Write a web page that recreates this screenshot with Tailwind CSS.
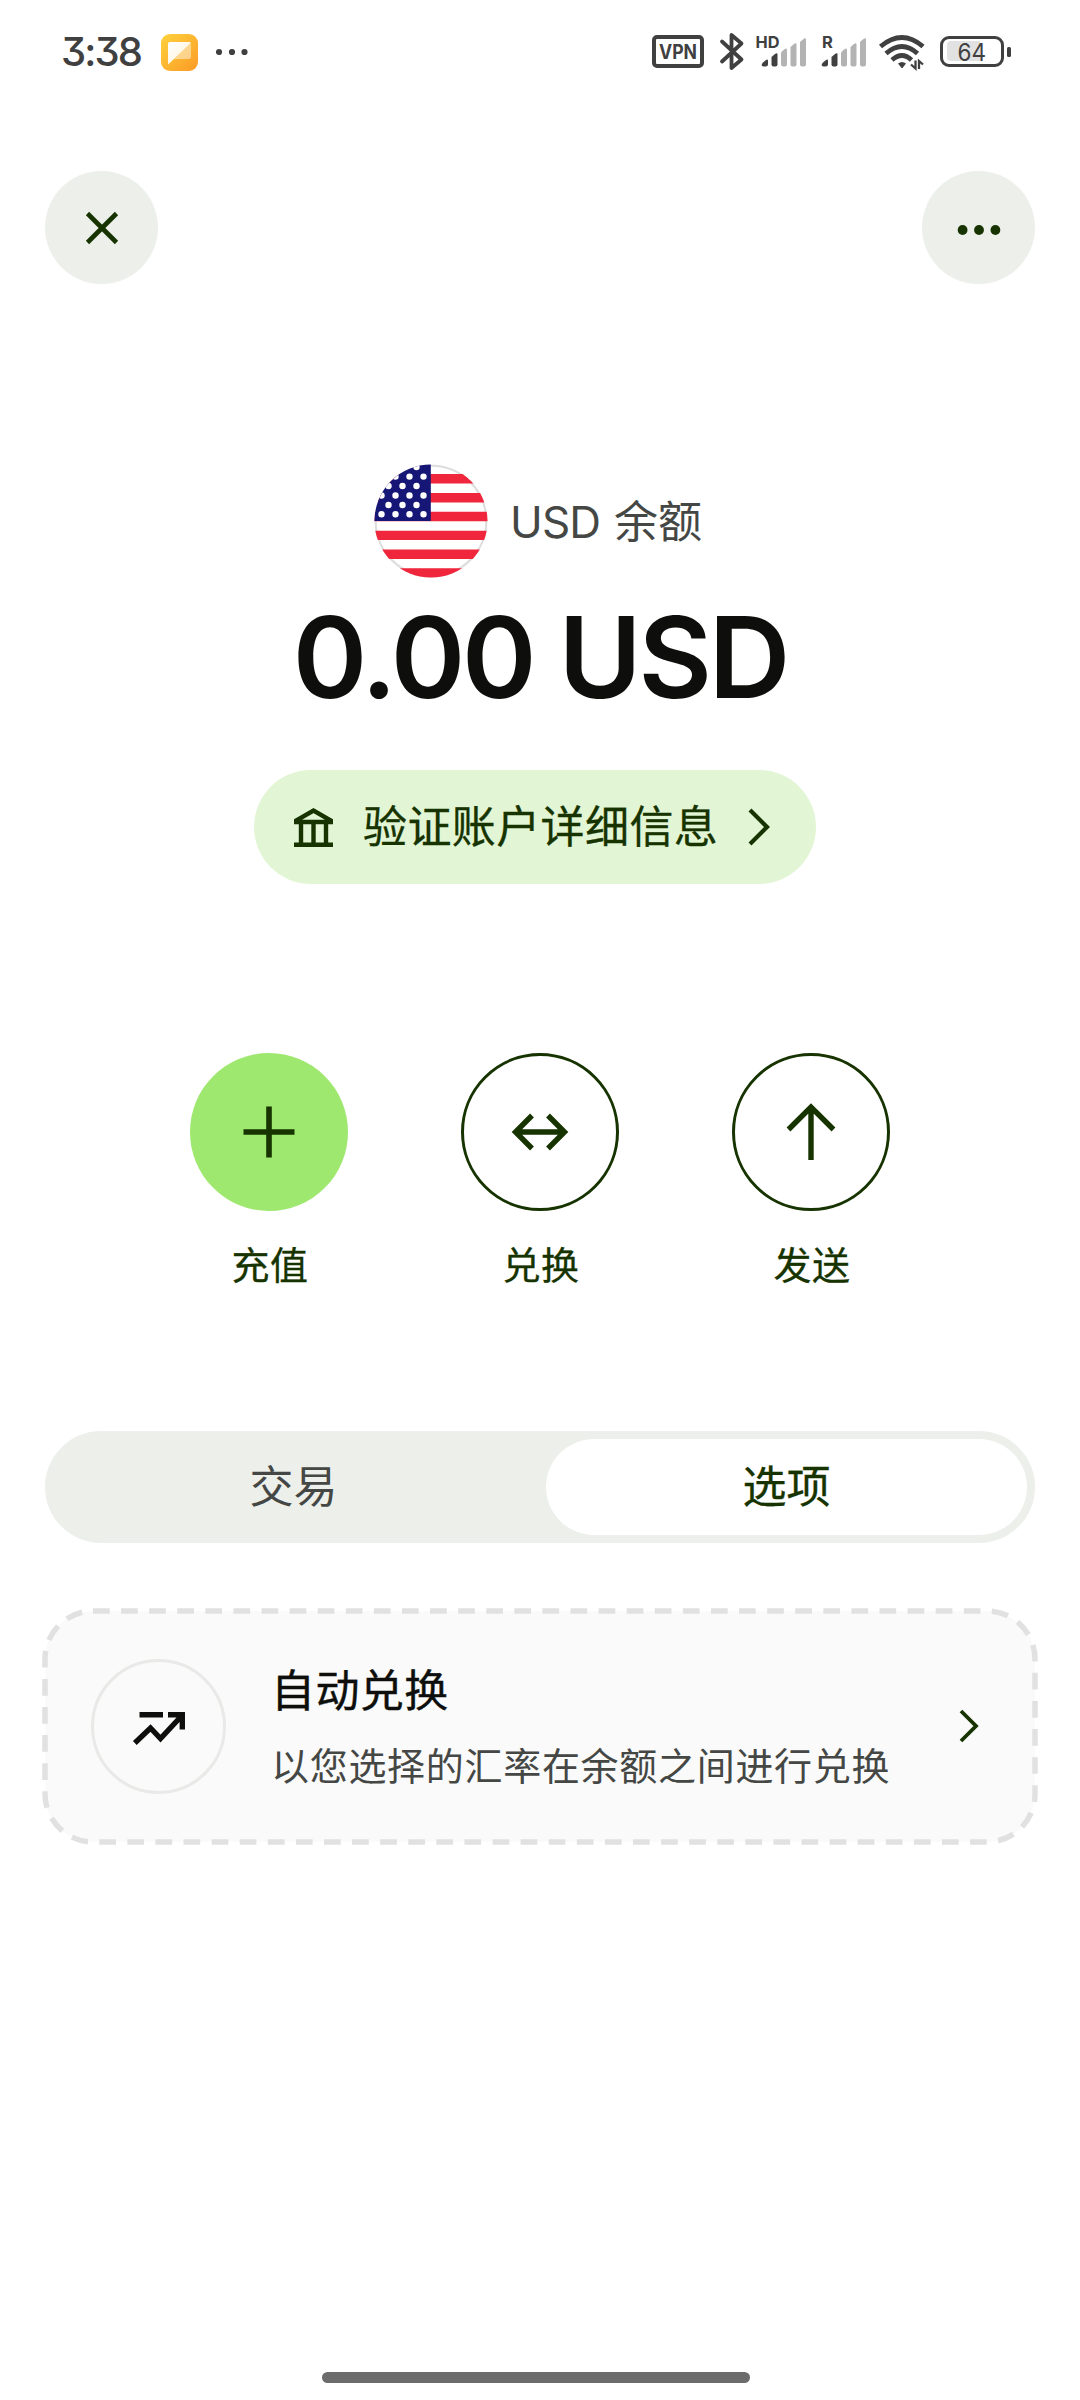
<!DOCTYPE html>
<html lang="zh-CN">
<head>
<meta charset="utf-8">
<title>USD 余额</title>
<script src="https://cdn.jsdelivr.net/npm/@tailwindcss/browser@4"></script>
</head>
<body class="bg-white">
<div class="relative flex h-[2400px] w-[1080px] flex-col overflow-hidden bg-white font-['Inter','Noto_Sans_CJK_SC',sans-serif] text-[#163300]">

  <!-- Status bar -->
  <header class="flex h-[104px] items-center justify-between pl-[61px] pr-[69px] text-[#404040]">
    <div class="flex items-center">
      <span class="w-[100px] whitespace-nowrap text-[40px] leading-[40px] font-[450] tracking-[-1.9px] [font-feature-settings:'cv09']">3:38</span>
      <svg width="37" height="37" viewBox="0 0 37 37">
        <defs>
          <linearGradient id="note" x1="0" y1="0" x2="1" y2="1"><stop offset="0" stop-color="#ffd23c"/><stop offset="1" stop-color="#fb9a26"/></linearGradient>
          <linearGradient id="fold" x1="0" y1="0" x2="1" y2="1"><stop offset="0" stop-color="#fff"/><stop offset="1" stop-color="#fff3d6"/></linearGradient>
        </defs>
        <rect width="37" height="37" rx="9" fill="url(#note)"/>
        <path d="M9 8H27.500Q30 8 30 10.500V22.500Q30 25 27.500 25H13L7 30.500V10Q7 8 9 8Z" fill="#fff" opacity=".45"/>
        <path d="M9 8H27.500Q30 8 29.500 9L7 30.500V10Q7 8 9 8Z" fill="url(#fold)"/>
      </svg>
      <svg class="ml-[18px]" width="32" height="8" viewBox="0 0 32 8" fill="#404040"><circle cx="3" cy="4" r="3.100"/><circle cx="16" cy="4" r="3.100"/><circle cx="28.500" cy="4" r="3.100"/></svg>
    </div>
    <svg width="359" height="40" viewBox="652 32 359 40" fill="#404040" font-family="Inter, sans-serif">
      <rect x="654" y="37" width="48" height="29" rx="3" fill="none" stroke="#404040" stroke-width="4"/>
      <text x="659" y="58.500" font-size="19.500" font-weight="700" textLength="38" lengthAdjust="spacingAndGlyphs">VPN</text>
      <path d="M722 41.500 741.500 59.500 731.500 68V35L741.500 43.500 722 61.500" fill="none" stroke="#404040" stroke-width="3.800" stroke-linejoin="round" stroke-linecap="round"/>
      <text x="755.500" y="47.500" font-size="16.500" font-weight="700" textLength="24" lengthAdjust="spacingAndGlyphs">HD</text>
      <path d="M763 62.500 766 60Q768 59 768 60.500V64Q768 66.500 765.500 66.500H763.500Q760 66 763 62.500Z"/>
      <path d="M771.500 57Q777.500 51 777.500 54.500V64.500Q777.500 66.500 775.500 66.500H773.500Q771.500 66.500 771.500 64.500Z"/>
      <g fill="#b3b3b3">
        <path d="M781 52.500Q787 46 787 50V64.500Q787 66.500 785 66.500H783Q781 66.500 781 64.500Z"/>
        <path d="M790.500 47Q796.500 41 796.500 44.500V64.500Q796.500 66.500 794.500 66.500H792.500Q790.500 66.500 790.500 64.500Z"/>
        <path d="M800 42Q806 36 806 39.500V64.500Q806 66.500 804 66.500H802Q800 66.500 800 64.500Z"/>
      </g>
      <text x="822" y="47.500" font-size="16.500" font-weight="700">R</text>
      <g transform="translate(60)">
        <path d="M763 62.500 766 60Q768 59 768 60.500V64Q768 66.500 765.500 66.500H763.500Q760 66 763 62.500Z"/>
        <path d="M771.500 57Q777.500 51 777.500 54.500V64.500Q777.500 66.500 775.500 66.500H773.500Q771.500 66.500 771.500 64.500Z"/>
        <g fill="#b3b3b3">
          <path d="M781 52.500Q787 46 787 50V64.500Q787 66.500 785 66.500H783Q781 66.500 781 64.500Z"/>
          <path d="M790.500 47Q796.500 41 796.500 44.500V64.500Q796.500 66.500 794.500 66.500H792.500Q790.500 66.500 790.500 64.500Z"/>
          <path d="M800 42Q806 36 806 39.500V64.500Q806 66.500 804 66.500H802Q800 66.500 800 64.500Z"/>
        </g>
      </g>
      <g fill="none" stroke="#404040" stroke-width="4.800">
        <path d="M880.500 46.500Q902 28.500 923 46.500"/><path d="M886 53.500Q902 39.500 917.500 53.500"/><path d="M892 60Q902 51 911.500 60"/>
      </g>
      <path d="M898 63.500Q902 60.500 906 63.500L902.500 68H901.500Z"/>
      <path d="M911 64.500 915.500 68.500V60.500M919 69V61L923 64.500" fill="none" stroke="#404040" stroke-width="2.300"/>
      <rect x="941.500" y="37.500" width="61" height="28" rx="7.500" fill="none" stroke="#404040" stroke-width="3"/>
      <path d="M951 41H980V61H951Q947 61 947 57V45Q947 41 951 41Z" fill="#e2e2e2"/>
      <text x="957.500" y="60.500" font-size="24" font-weight="400" textLength="28.500" lengthAdjust="spacingAndGlyphs">64</text>
      <rect x="1007" y="47" width="4" height="10" rx="1.500"/>
    </svg>
  </header>

  <!-- Top actions -->
  <nav class="mt-[67px] flex justify-between px-[45px]">
    <button class="flex size-[113px] items-center justify-center rounded-full bg-[#edefeb]">
      <svg width="34" height="34" viewBox="0 0 34 34" fill="none" stroke="#163300" stroke-width="4.600"><path d="M2.500 2.500 31.500 31.500M31.500 2.500 2.500 31.500"/></svg>
    </button>
    <button class="flex size-[113px] items-center justify-center rounded-full bg-[#edefeb]">
      <svg class="mt-[5px]" width="44" height="12" viewBox="0 0 44 12" fill="#163300"><circle cx="5.600" cy="6" r="4.900"/><circle cx="22" cy="6" r="4.900"/><circle cx="38.400" cy="6" r="4.900"/></svg>
    </button>
  </nav>

  <!-- Balance -->
  <section class="mt-[180px] flex flex-col items-center">
    <div class="flex h-[114px] w-[332px] items-center gap-[22px]">
      <svg class="shrink-0" width="114" height="114" viewBox="0 0 114 114">
        <defs><clipPath id="disc"><circle cx="57" cy="57" r="56.500"/></clipPath></defs>
        <g clip-path="url(#disc)">
          <rect width="114" height="114" fill="#fff"/>
          <circle cx="57" cy="57" r="55.500" fill="none" stroke="#dedede" stroke-width="2.500"/>
          <path d="M0 10h114v9.400H0zM0 29h114v9.400H0zM0 47.800h114v9.400H0zM0 66.700h114v9.400H0zM0 85.500h114v9.400H0zM0 104.300h114v9.700H0z" fill="#f0263c"/>
          <rect width="56.800" height="57" fill="#151676"/>
          <path d="M28.500 3.100h.01M42.500 3.100h.01M21.500 12.600h.01M35.500 12.600h.01M49.500 12.600h.01M14.500 22h.01M28.500 22h.01M42.500 22h.01M7.500 31.500h.01M21.500 31.500h.01M35.500 31.500h.01M49.500 31.500h.01M14.500 41h.01M28.500 41h.01M42.500 41h.01M7.500 50.300h.01M21.500 50.300h.01M35.500 50.300h.01M49.500 50.300h.01" fill="none" stroke="#fff" stroke-width="6.400" stroke-linecap="round"/>
        </g>
      </svg>
      <span class="mt-[2px] flex whitespace-nowrap text-[44px] leading-[56px] text-[#454745]"><span class="w-[91px] tracking-[-0.8px]">USD</span><span class="ml-[13px]">余额</span></span>
    </div>
    <h1 class="mt-[15px] mb-[-1px] whitespace-nowrap text-[113px] leading-[128px] font-semibold tracking-[-3.200px] text-[#0e0f0c]">0.00 USD</h1>

    <button class="mt-[50px] mr-[10px] flex h-[114px] w-[562px] items-center rounded-full bg-[#e2f6d5] pl-[40px]">
      <svg width="39" height="40" viewBox="0 0 39 40" fill="none" stroke="#163300" stroke-width="4.400"><path d="M0 37.800H39M7 38V15M19.500 38V15M32 38V15M2.200 15V13.500L19.500 3.500 36.800 13.500V15Z"/></svg>
      <span class="ml-[30px] whitespace-nowrap text-[44px] leading-[56px] tracking-[0.4px] [-webkit-text-stroke:0.3px_#163300]">验证账户详细信息</span>
      <svg class="ml-[30px]" width="22" height="38" viewBox="0 0 22 38" fill="none" stroke="#163300" stroke-width="4.200"><path d="M2 2 19 19 2 36"/></svg>
    </button>
  </section>

  <!-- Actions -->
  <section class="mt-[169px] flex justify-center gap-[113px]">
    <div class="flex w-[158px] flex-col items-center">
      <div class="flex size-[158px] items-center justify-center rounded-full bg-[#9fe870]">
        <svg width="52" height="52" viewBox="0 0 52 52" stroke="#163300" stroke-width="5.600"><path d="M26 .5V51.500M.5 26H51.500"/></svg>
      </div>
      <span class="mt-[30px] ml-[2px] whitespace-nowrap text-[38px] leading-[48px] tracking-[0.6px] [-webkit-text-stroke:0.3px_#163300]">充值</span>
    </div>
    <div class="flex w-[158px] flex-col items-center">
      <div class="flex size-[158px] items-center justify-center rounded-full border-[3px] border-[#163300]">
        <svg width="58" height="40" viewBox="0 0 58 40" fill="none" stroke="#163300" stroke-width="5.400"><path d="M4 20H54M21 3.500 4.500 20 21 36.500M37 3.500 53.500 20 37 36.500"/></svg>
      </div>
      <span class="mt-[30px] ml-[2px] whitespace-nowrap text-[38px] leading-[48px] tracking-[0.6px] [-webkit-text-stroke:0.3px_#163300]">兑换</span>
    </div>
    <div class="flex w-[158px] flex-col items-center">
      <div class="flex size-[158px] items-center justify-center rounded-full border-[3px] border-[#163300]">
        <svg class="mb-[2px]" width="50" height="57" viewBox="0 0 50 57" fill="none" stroke="#163300" stroke-width="5.400"><path d="M25 4V57M2.500 26.500 25 4 47.500 26.500"/></svg>
      </div>
      <span class="mt-[30px] ml-[2px] whitespace-nowrap text-[38px] leading-[48px] tracking-[0.6px] [-webkit-text-stroke:0.3px_#163300]">发送</span>
    </div>
  </section>

  <!-- Tabs -->
  <div class="mx-[45px] mt-[142px] flex h-[112px] justify-between rounded-full bg-[#edefeb] p-[8px] text-[44px] leading-[56px]">
    <div class="flex w-[479px] items-center justify-center pl-[2px] text-[#454745]">交易</div>
    <div class="flex w-[481px] items-center justify-center rounded-full bg-white [-webkit-text-stroke:0.3px_#163300]">选项</div>
  </div>

  <!-- Auto conversion card -->
  <div class="relative mx-[42px] mt-[65px] flex h-[236px] items-center pl-[49px]">
    <svg class="absolute inset-0" width="996" height="237" viewBox="0 0 996 237"><rect x="3" y="3" width="990" height="231" rx="48" fill="#fafafa" stroke="#e1e1e1" stroke-width="5.500" stroke-dasharray="16.700 11.390"/></svg>
    <div class="relative flex size-[135px] shrink-0 items-center justify-center rounded-full border-[3px] border-[#e9eae8]">
      <svg class="mt-[3px]" width="54" height="34" viewBox="0 0 54 34" fill="none" stroke="#0e0f0c" stroke-width="5.400"><path d="M7.500 3.700H31M36 3.700H53M50.300 3.700V18.500M2.800 32 18.500 17 28.500 27.500 49.500 5"/></svg>
    </div>
    <div class="relative mt-[5px] ml-[45px] flex w-[640px] flex-col">
      <span class="whitespace-nowrap text-[44px] leading-[60px] tracking-[0.4px] text-[#0e0f0c] [-webkit-text-stroke:0.4px_#0e0f0c]">自动兑换</span>
      <span class="mt-[15px] whitespace-nowrap text-[38px] leading-[60px] tracking-[0.7px] text-[#454745]">以您选择的汇率在余额之间进行兑换</span>
    </div>
    <svg class="relative ml-[48px]" width="20" height="34" viewBox="0 0 20 34" fill="none" stroke="#163300" stroke-width="3.800"><path d="M2 2 17 17 2 32"/></svg>
  </div>

  <!-- Home indicator -->
  <div class="mt-auto mb-[17px] ml-[322px] h-[11px] w-[428px] rounded-full bg-[#6c6c6c]"></div>
</div>
</body>
</html>
